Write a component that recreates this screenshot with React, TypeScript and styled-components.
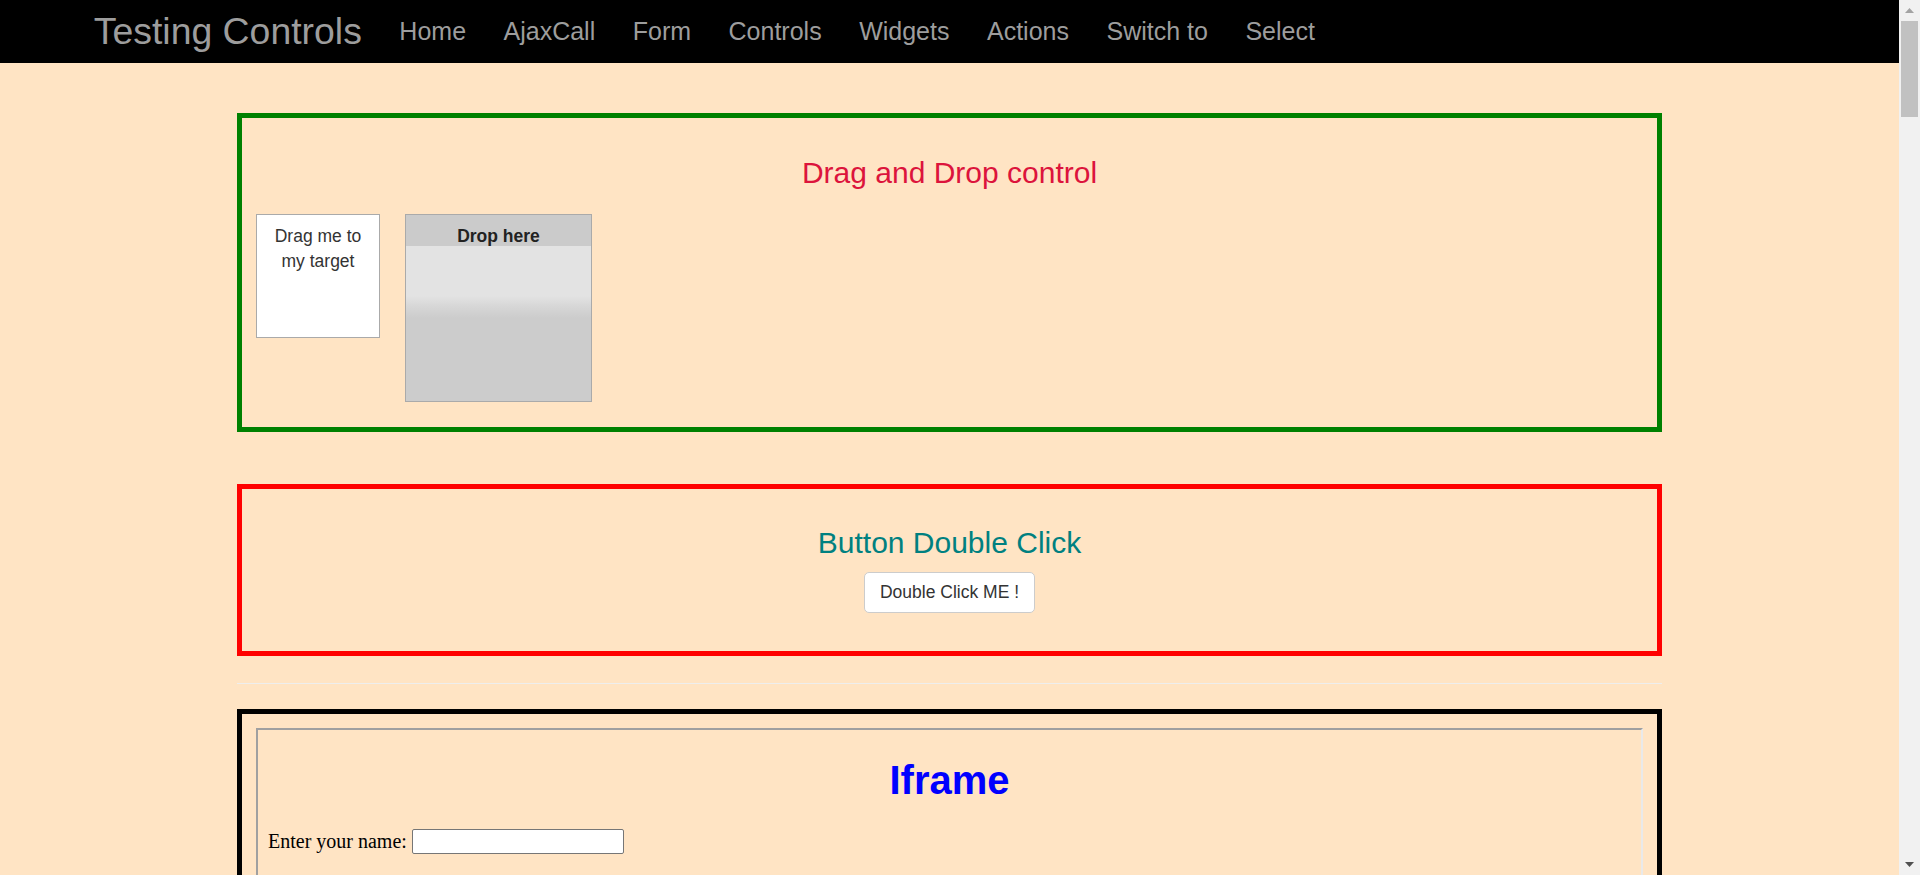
import React from "react";
import styled, { createGlobalStyle } from "styled-components";

const GlobalStyle = createGlobalStyle`
  html, body {
    margin: 0;
    padding: 0;
    height: 100%;
    overflow: hidden;
  }
  body {
    background: #ffe4c4;
    font-family: "Liberation Sans", Arial, Helvetica, sans-serif;
    color: #333;
  }
  * { box-sizing: border-box; }
`;

const Shell = styled.div`
  display: flex;
  height: 100vh;
  overflow: hidden;
  background: #ffe4c4;
`;

const Page = styled.div`
  flex: 1;
  min-width: 0;
  overflow: hidden;
`;

/* ---------- navbar ---------- */
const Navbar = styled.nav`
  display: flex;
  align-items: center;
  height: 63px;
  padding-left: 75px;
  background: #000;
`;

const Brand = styled.a`
  padding: 0 18.75px;
  font-size: 37.4px;
  line-height: 25px;
  color: #9d9d9d;
  text-decoration: none;
  white-space: nowrap;
`;

const NavList = styled.ul`
  display: flex;
  margin: 0;
  padding: 0;
  list-style: none;
`;

const NavLink = styled.a`
  display: block;
  padding: 0 18.75px;
  font-size: 25px;
  line-height: 25px;
  color: #9d9d9d;
  text-decoration: none;
  white-space: nowrap;
`;

/* ---------- content ---------- */
const Container = styled.main`
  width: 1425px;
  margin: 0 auto;
`;

const Panel = styled.section<{ $color: string; $mt: number; $pt: number; $pb: number }>`
  margin-top: ${(p) => p.$mt}px;
  padding: ${(p) => p.$pt}px 0 ${(p) => p.$pb}px;
  border: 5px solid ${(p) => p.$color};
`;

const PanelTitle = styled.h3<{ $color: string }>`
  margin: 0;
  font-size: 30px;
  line-height: 33px;
  font-weight: 400;
  text-align: center;
  color: ${(p) => p.$color};
`;

const DragRow = styled.div`
  display: flex;
  align-items: flex-start;
  gap: 25px;
  margin-top: 25px;
  padding-left: 14px;
`;

const Draggable = styled.div`
  width: 124px;
  height: 124px;
  padding: 9px 8.75px 0;
  border: 1px solid #aaa;
  background: #fff;
  font-size: 17.5px;
  line-height: 25px;
  text-align: center;
  color: #333;
`;

const Droppable = styled.div`
  display: flex;
  flex-direction: column;
  width: 187px;
  height: 188px;
  border: 1px solid #aaa;
  background: #ccc;
`;

const DropHeader = styled.div`
  height: 31px;
  padding-top: 10px;
  font-size: 17.5px;
  line-height: 22px;
  font-weight: 700;
  text-align: center;
  color: #222;
  background: #cbcbcb;
`;

const DropBody = styled.div`
  flex: 1;
  background: linear-gradient(
    to bottom,
    #e3e3e3 0px,
    #e3e3e3 50px,
    #d7d7d7 60px,
    #cccccc 72px,
    #cccccc 100%
  );
`;

const ButtonRow = styled.div`
  display: flex;
  justify-content: center;
  margin-top: 13px;
`;

const DoubleClickButton = styled.button`
  padding: 7px 15px;
  font-family: "Liberation Sans", Arial, sans-serif;
  font-size: 17.5px;
  line-height: 25px;
  color: #333;
  background: #fff;
  border: 1px solid #ccc;
  border-radius: 5px;
  cursor: pointer;
`;

const Divider = styled.hr`
  margin: 27px 0 25px;
  border: 0;
  border-top: 1px solid #eee;
`;

const FramePanel = styled.section`
  padding: 14px 14px 0;
  border: 5px solid #000;
  border-bottom: 0;
`;

const FakeFrame = styled.div`
  min-height: 400px;
  border-style: solid;
  border-width: 2px;
  border-color: #a0a0a0 #e9e9e9 #e9e9e9 #a0a0a0;
  background: #ffe4c4;
`;

const FrameBody = styled.div`
  padding: 0 10px;
  font-family: "Liberation Serif", "Times New Roman", serif;
  color: #000;
`;

const FrameTitle = styled.h1`
  margin: 27px 0 26px;
  font-family: "Liberation Sans", Arial, sans-serif;
  font-size: 40px;
  line-height: 46px;
  font-weight: 700;
  text-align: center;
  color: #0000ff;
`;

const FieldRow = styled.div`
  display: flex;
  align-items: center;
  gap: 5px;
  height: 25px;
`;

const FieldLabel = styled.label`
  font-size: 20px;
  line-height: 23px;
`;

const TextInput = styled.input`
  width: 212px;
  height: 25px;
  padding: 1px 3px;
  border: 1px solid #767676;
  border-radius: 2px;
  background: #fff;
  font-size: 16px;
`;

/* ---------- scrollbar ---------- */
const Scrollbar = styled.div`
  display: flex;
  flex-direction: column;
  width: 21px;
  height: 100%;
  background: #f1f1f1;
`;

const ScrollButton = styled.div`
  display: flex;
  align-items: center;
  justify-content: center;
  height: 21px;
`;

const ScrollTrack = styled.div`
  flex: 1;
  padding: 0 2px;
`;

const ScrollThumb = styled.div`
  height: 96px;
  background: #c1c1c1;
`;

const Arrow = ({ up, color }: { up?: boolean; color: string }) => (
  <svg width="9" height="5" viewBox="0 0 9 5">
    {up ? (
      <polygon points="0,5 4.5,0 9,5" fill={color} />
    ) : (
      <polygon points="0,0 9,0 4.5,5" fill={color} />
    )}
  </svg>
);

const links = ["Home", "AjaxCall", "Form", "Controls", "Widgets", "Actions", "Switch to", "Select"];

export default function App() {
  return (
    <>
      <GlobalStyle />
      <Shell>
        <Page>
          <Navbar>
            <Brand href="#">Testing Controls</Brand>
            <NavList>
              {links.map((l) => (
                <li key={l}>
                  <NavLink href="#">{l}</NavLink>
                </li>
              ))}
            </NavList>
          </Navbar>
          <Container>
            <Panel $color="#008000" $mt={50} $pt={38} $pb={25}>
              <PanelTitle $color="#dc143c">Drag and Drop control</PanelTitle>
              <DragRow>
                <Draggable>Drag me to my target</Draggable>
                <Droppable>
                  <DropHeader>Drop here</DropHeader>
                  <DropBody />
                </Droppable>
              </DragRow>
            </Panel>
            <Panel $color="#ff0000" $mt={52} $pt={37} $pb={38}>
              <PanelTitle $color="#008080">Button Double Click</PanelTitle>
              <ButtonRow>
                <DoubleClickButton>Double Click ME !</DoubleClickButton>
              </ButtonRow>
            </Panel>
            <Divider />
            <FramePanel>
              <FakeFrame>
                <FrameBody>
                  <FrameTitle>Iframe</FrameTitle>
                  <FieldRow>
                    <FieldLabel>Enter your name:</FieldLabel>
                    <TextInput type="text" />
                  </FieldRow>
                </FrameBody>
              </FakeFrame>
            </FramePanel>
          </Container>
        </Page>
        <Scrollbar>
          <ScrollButton>
            <Arrow up color="#a3a3a3" />
          </ScrollButton>
          <ScrollTrack>
            <ScrollThumb />
          </ScrollTrack>
          <ScrollButton>
            <Arrow color="#505050" />
          </ScrollButton>
        </Scrollbar>
      </Shell>
    </>
  );
}
